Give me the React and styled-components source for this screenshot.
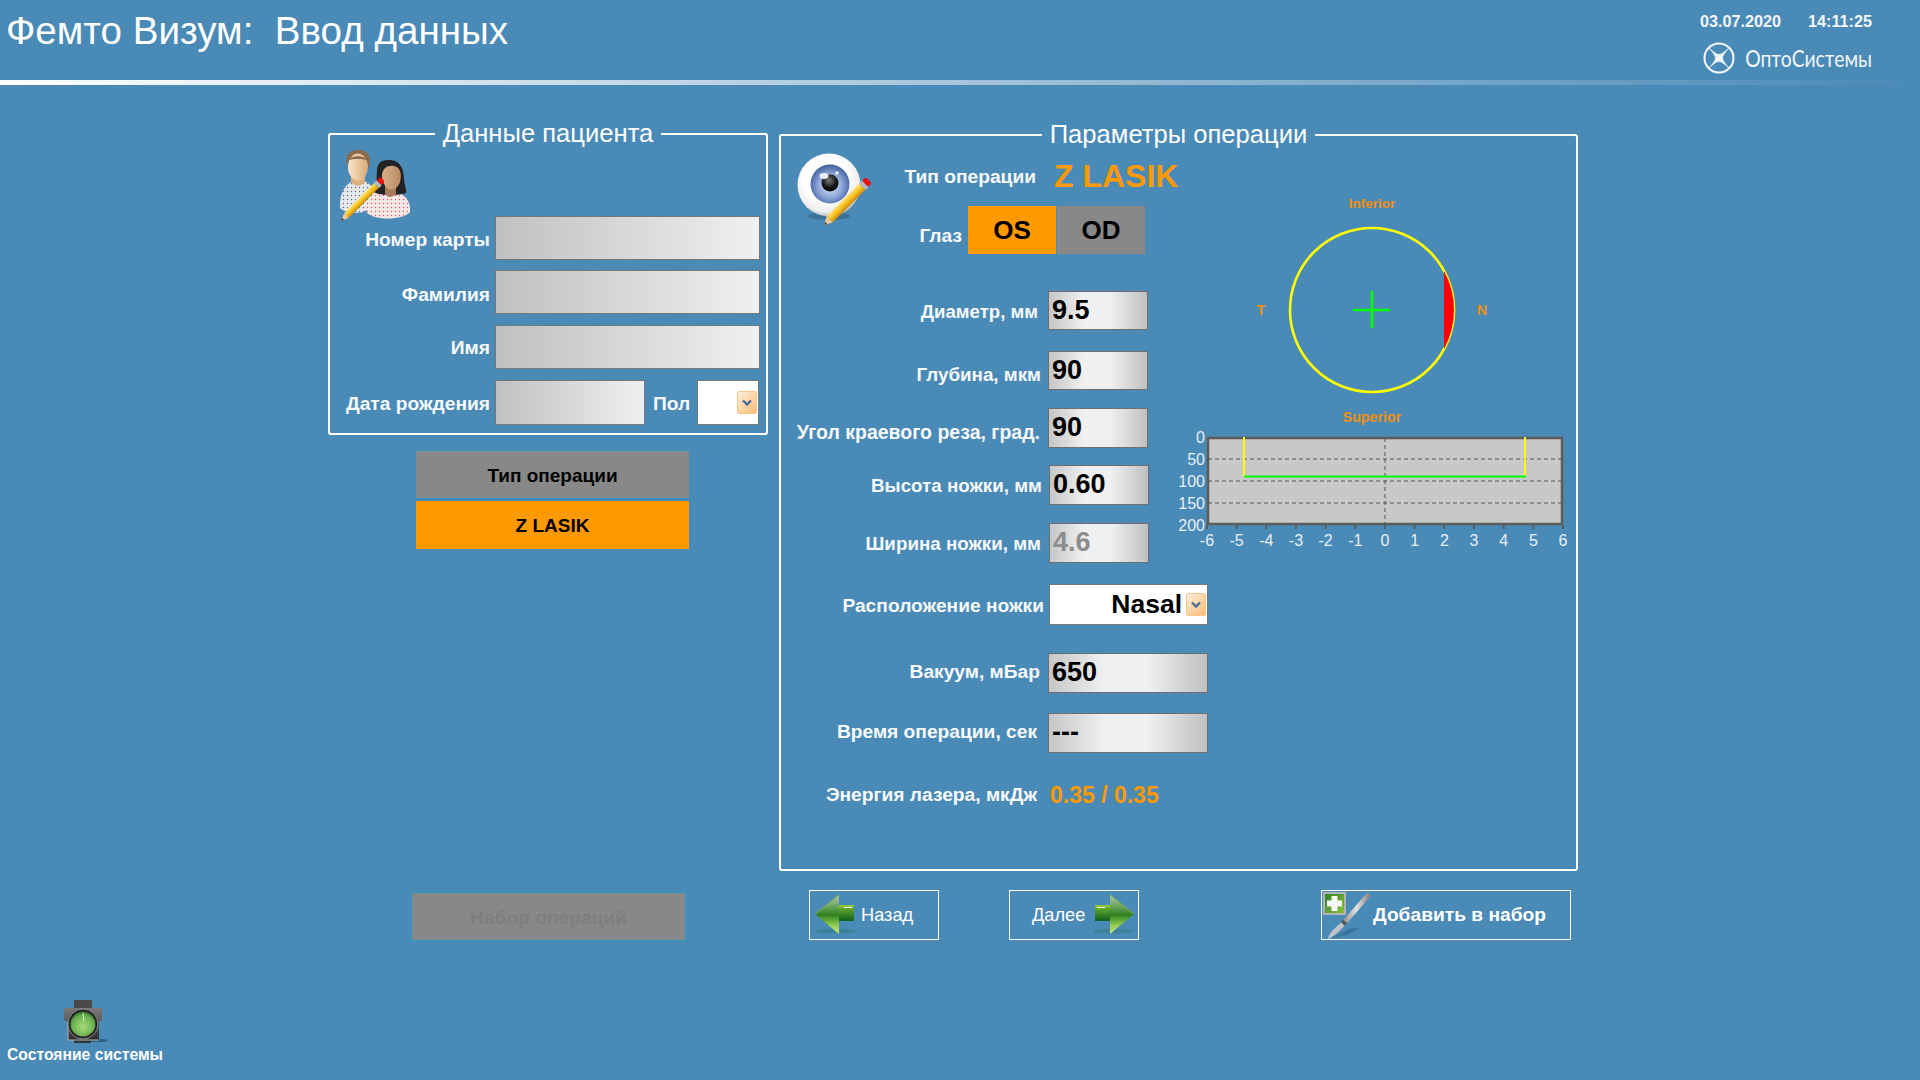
import styled, { createGlobalStyle } from "styled-components";

const GlobalStyle = createGlobalStyle`
  html, body {
    margin: 0;
    padding: 0;
    background: #4a8ab7;
  }
  * {
    box-sizing: border-box;
  }
`;

const Page = styled.div`
  width: 1920px;
  height: 1080px;
  overflow: hidden;
  display: flex;
  flex-direction: column;
  background: #4a8ab7;
  color: #fff;
  font-family: "Liberation Sans", Arial, sans-serif;
`;

const Header = styled.header`
  height: 80px;
  display: flex;
  justify-content: space-between;
  padding: 0 48px 0 6px;
`;

const Title = styled.h1`
  margin: 0;
  font-size: 38.6px;
  font-weight: 400;
  line-height: 62px;
  white-space: pre;
`;

const HeaderInfo = styled.div`
  display: flex;
  flex-direction: column;
  align-items: flex-end;
`;

const Clock = styled.div`
  display: flex;
  gap: 27px;
  margin-top: 12px;
  font-size: 16.2px;
  font-weight: 700;
  line-height: 18px;
  color: #f2f6f9;
`;

const Brand = styled.div`
  display: flex;
  align-items: center;
  gap: 10px;
  margin-top: 12px;
`;

const BrandName = styled.span`
  margin-left: -24px;
  font-family: Lato, "Liberation Sans", sans-serif;
  font-size: 23px;
  line-height: 30px;
  color: #f2f6f9;
  transform: scaleX(0.84);
  transform-origin: right center;
`;

const Divider = styled.div`
  height: 5px;
  background: linear-gradient(90deg, #fff 0%, #4a8ab7 100%);
`;

const Workspace = styled.main`
  height: 915px;
  display: flex;
  padding: 35px 0 0 328px;
`;

const LeftColumn = styled.div`
  width: 440px;
  display: flex;
  flex-direction: column;
`;

const RightColumn = styled.div`
  width: 799px;
  margin: 1px 0 0 11px;
  display: flex;
  flex-direction: column;
`;

const Panel = styled.fieldset`
  height: ${(p) => p.$height}px;
  margin: 0;
  padding: 0;
  min-width: 0;
  border: 2px solid #fff;
  border-radius: 3px;
`;

const PanelTitle = styled.legend`
  margin: 0 auto;
  padding: 0 8px;
  font-size: 25.6px;
  line-height: 28px;
  color: #fff;
  transform: translateY(-1px);
`;

const PatientRow = styled.div`
  display: flex;
  align-items: center;
  height: ${(p) => p.$height || 44}px;
  margin-top: ${(p) => p.$top}px;
`;

const FieldLabel = styled.span`
  flex: none;
  width: ${(p) => p.$width}px;
  margin-top: ${(p) => (p.$shift || 0) * 2}px;
  text-align: right;
  font-size: ${(p) => p.$size || 19.2}px;
  font-weight: 700;
  line-height: 24px;
  white-space: nowrap;
  color: #f7fafc;
`;

const PatientInput = styled.div`
  flex: none;
  width: ${(p) => p.$width}px;
  height: 100%;
  margin-left: 5px;
  border: 1px solid #777;
  background: linear-gradient(90deg, #c0c0c0 0%, #f0f0f0 100%);
`;

const SexLabel = styled.span`
  flex: none;
  width: 44px;
  margin: 2px 0 0 8px;
  font-size: 19.2px;
  font-weight: 700;
  line-height: 24px;
  color: #f7fafc;
`;

const SelectBox = styled.div`
  flex: none;
  display: flex;
  align-items: center;
  justify-content: flex-end;
  gap: 4px;
  width: ${(p) => p.$width}px;
  height: 100%;
  margin-left: ${(p) => p.$left}px;
  padding-right: 1px;
  border: 1px solid #777;
  background: #fff;
  color: #000;
  font-size: 26.5px;
  font-weight: 700;
`;

const ArrowButton = styled.span`
  flex: none;
  display: flex;
  align-items: center;
  justify-content: center;
  width: 20px;
  height: 23px;
  border: 1px solid #f7c48e;
  border-radius: 2px;
  background: linear-gradient(135deg, #fdeedd 0%, #fbbd76 100%);
`;

const OperationStack = styled.div`
  display: flex;
  flex-direction: column;
  gap: 2px;
  width: 273px;
  margin: 15px 0 0 88px;
`;

const OperationButton = styled.button`
  height: ${(p) => (p.$active ? 48 : 49)}px;
  padding: 2px 0 0;
  border: 1px solid ${(p) => (p.$active ? "#ff9900" : "#2a9ac0")};
  border-width: 1px 0;
  background: ${(p) => (p.$active ? "#ff9900" : "#888")};
  color: #000;
  font-family: inherit;
  font-size: 19px;
  font-weight: 700;
`;

const DisabledButton = styled(OperationButton)`
  width: 275px;
  height: 49px;
  margin: 343px 0 0 83px;
  border-width: 1px;
  color: #7e7e7e;
  font-size: 19.2px;
`;

const UpperSection = styled.div`
  display: flex;
  height: 414px;
`;

const FormColumn = styled.div`
  width: 389px;
  flex: none;
`;

const DiagramColumn = styled.div`
  width: 405px;
  margin-top: 41px;
  display: flex;
  flex-direction: column;
`;

const TopBlock = styled.div`
  display: flex;
  height: 105px;
`;

const TopFields = styled.div`
  display: flex;
  flex-direction: column;
  margin-left: 34px;
`;

const TypeRow = styled.div`
  display: flex;
  align-items: center;
  height: 57px;
`;

const TypeValue = styled.span`
  margin: -3px 0 0 18px;
  font-size: 32px;
  font-weight: 700;
  white-space: nowrap;
  color: #ff9900;
`;

const EyeRow = styled.div`
  display: flex;
  align-items: center;
  height: 48px;
`;

const EyeButton = styled.button`
  width: 88px;
  height: 48px;
  margin-left: ${(p) => p.$left}px;
  padding: 0;
  border: none;
  background: ${(p) => (p.$active ? "#ff9900" : "#888")};
  color: #000;
  font-family: inherit;
  font-size: 26px;
  font-weight: 700;
`;

const ParamRow = styled.div`
  display: flex;
  align-items: center;
  height: ${(p) => p.$height}px;
  margin-top: ${(p) => p.$top}px;
`;

const ValueField = styled.div`
  flex: none;
  width: ${(p) => p.$width}px;
  height: 100%;
  margin-left: ${(p) => p.$left}px;
  padding-left: 3px;
  border: 1px solid #6e6e6e;
  background: linear-gradient(90deg, #c6c6c6 0%, #f0f0f0 35%, #f0f0f0 62%, #c0c0c0 100%);
  color: ${(p) => (p.$disabled ? "#8c8c8c" : "#000")};
  font-size: 27px;
  font-weight: 700;
  line-height: 37px;
`;

const EnergyValue = styled.span`
  margin-left: 13px;
  font-size: 23px;
  font-weight: 700;
  color: #ff9900;
`;

const NavRow = styled.div`
  display: flex;
  margin-top: 19px;
  padding-left: 30px;
`;

const NavButton = styled.button`
  display: flex;
  align-items: center;
  width: ${(p) => p.$width}px;
  height: 50px;
  margin-left: ${(p) => p.$left || 0}px;
  padding: 0 0 0 ${(p) => p.$pad}px;
  gap: ${(p) => p.$gap}px;
  border: 1px solid #fff;
  background: transparent;
  color: #fff;
  font-family: inherit;
  font-size: ${(p) => (p.$strong ? 19.2 : 18.2)}px;
  font-weight: ${(p) => (p.$strong ? 700 : 400)};
  white-space: nowrap;
`;

const StatusBlock = styled.div`
  width: 156px;
  margin-left: 7px;
  display: flex;
  flex-direction: column;
  align-items: center;
  gap: 3px;
`;

const StatusText = styled.span`
  font-size: 15.7px;
  font-weight: 700;
  line-height: 18px;
  white-space: nowrap;
`;

const IconSvg = styled.svg`
  display: block;
  flex: none;
  overflow: visible;
`;

const PatientsSvg = styled(IconSvg)`
  margin: 2px 0 -8px 8px;
`;

const EyeSvg = styled(IconSvg)`
  margin: 4px 0 0 17px;
`;

const TrafficSvg = styled(IconSvg)`
  margin-left: 2px;
`;

const LogoMark = () => (
  <IconSvg width="32" height="32" viewBox="0 0 30 30">
    <circle cx="15" cy="15" r="13.6" fill="none" stroke="#f4f7fa" strokeWidth="1.9" />
    <path
      d="M5.4 5.4 Q13 12.5 15 11.5 Q17 12.5 24.6 5.4 Q17.5 13 18.5 15 Q17.5 17 24.6 24.6 Q17 17.5 15 18.5 Q13 17.5 5.4 24.6 Q12.5 17 11.5 15 Q12.5 13 5.4 5.4 Z"
      fill="#f4f7fa"
      stroke="#f4f7fa"
      strokeWidth="0.6"
    />
  </IconSvg>
);

const Chevron = () => (
  <IconSvg width="12" height="8" viewBox="0 0 12 8">
    <path d="M2 1.5 L6 5.5 L10 1.5" fill="none" stroke="#4c6a92" strokeWidth="2.4" />
  </IconSvg>
);

const Pencil = ({ id, x1, y1, x2, y2, half = 3.4 }) => {
  const angle = (Math.atan2(y2 - y1, x2 - x1) * 180) / Math.PI;
  const len = Math.hypot(x2 - x1, y2 - y1);
  return (
    <g transform={`translate(${x1} ${y1}) rotate(${angle})`}>
      <defs>
        <linearGradient id={id} x1="0" y1="0" x2="0" y2="1">
          <stop offset="0" stopColor="#ffe27a" />
          <stop offset="0.5" stopColor="#f6c21e" />
          <stop offset="1" stopColor="#c98a10" />
        </linearGradient>
      </defs>
      <path d={`M0 0 L8 ${-half} L8 ${half} Z`} fill="#edc998" />
      <path d="M0 0 L3 -1.3 L3 1.3 Z" fill="#333" />
      <rect x="8" y={-half} width={len - 16} height={half * 2} fill={`url(#${id})`} />
      <rect x={len - 8} y={-half - 0.2} width="4" height={half * 2 + 0.4} fill="#b8b8b8" />
      <rect x={len - 4} y={-half} width="5" height={half * 2} rx="2" fill="#ee1111" />
    </g>
  );
};

const PatientsIcon = () => (
  <PatientsSvg width="72" height="74" viewBox="0 0 72 74">
    <defs>
      <pattern id="dotsBlue" width="4" height="4" patternUnits="userSpaceOnUse">
        <rect width="4" height="4" fill="#e6e8ec" />
        <circle cx="1.5" cy="1.5" r="0.7" fill="#5a6a80" />
      </pattern>
      <pattern id="dotsRed" width="4" height="4" patternUnits="userSpaceOnUse">
        <rect width="4" height="4" fill="#f4e8e8" />
        <circle cx="1.5" cy="1.5" r="0.7" fill="#e05a5a" />
      </pattern>
      <linearGradient id="manFace" x1="0" y1="0" x2="1" y2="0">
        <stop offset="0" stopColor="#fde7c8" />
        <stop offset="1" stopColor="#d9a878" />
      </linearGradient>
      <linearGradient id="womanFace" x1="0" y1="0" x2="1" y2="0">
        <stop offset="0" stopColor="#d8b08a" />
        <stop offset="1" stopColor="#b98a64" />
      </linearGradient>
    </defs>
    <path d="M2 58 C1 42 8 32 20 29 C30 31 38 38 40 50 L26 62 C16 64 6 62 2 58 Z" fill="url(#dotsBlue)" />
    <path d="M13 24 L27 24 L27 32 C23 37 17 37 13 32 Z" fill="#dcae80" />
    <path d="M9 16 C6 2 14 0 21 0 C30 0 34 6 31 18 L28 10 C22 11 14 10 11 9 Z" fill="#8a6a4c" />
    <ellipse cx="20" cy="17" rx="10" ry="13.5" fill="url(#manFace)" />
    <path d="M10 10 C14 5 26 5 31 11 C26 8 15 9 10 10 Z" fill="#8a6a4c" />
    <path d="M29 63 C26 50 34 43 46 40 L54 40 C66 43 73 50 72 62 C66 70 38 71 29 63 Z" fill="url(#dotsRed)" />
    <path d="M39 20 C40 10 46 10 53 10 C63 11 66 20 66 30 C67 37 69 40 68 43 C60 46 42 46 36 42 C40 36 38 30 39 20 Z" fill="#222" />
    <path d="M47 33 L58 33 L58 44 C54 48 50 48 47 44 Z" fill="#a87c5a" />
    <path d="M44 26 C44 18 50 15 56 16 C63 17 64 26 62 32 C60 38 55 41 51 39 C47 37 44 32 44 26 Z" fill="url(#womanFace)" />
    <Pencil id="pencilA" x1={3} y1={71} x2={44} y2={30} />
  </PatientsSvg>
);

const EyeIcon = () => (
  <EyeSvg width="72" height="72" viewBox="0 0 72 72">
    <defs>
      <radialGradient id="eyeBall" cx="0.45" cy="0.4" r="0.62">
        <stop offset="0.55" stopColor="#fff" />
        <stop offset="0.85" stopColor="#ededed" />
        <stop offset="1" stopColor="#a9a9a9" />
      </radialGradient>
      <radialGradient id="iris" cx="0.5" cy="0.55" r="0.55">
        <stop offset="0" stopColor="#dbe6f7" />
        <stop offset="0.55" stopColor="#8fa8da" />
        <stop offset="1" stopColor="#3f5f9c" />
      </radialGradient>
      <radialGradient id="pupil" cx="0.45" cy="0.35" r="0.65">
        <stop offset="0" stopColor="#777" />
        <stop offset="0.6" stopColor="#1c1c1c" />
        <stop offset="1" stopColor="#000" />
      </radialGradient>
    </defs>
    <ellipse cx="31" cy="63" rx="21" ry="4" fill="#2f5f80" opacity="0.55" />
    <circle cx="31" cy="32" r="31.5" fill="url(#eyeBall)" />
    <circle cx="32" cy="31" r="19.5" fill="url(#iris)" />
    <circle cx="32" cy="30" r="8.5" fill="url(#pupil)" />
    <ellipse cx="26" cy="23" rx="4.5" ry="3" fill="#e9eef8" />
    <circle cx="39" cy="20" r="1.8" fill="#e9eef8" />
    <Pencil id="pencilB" x1={26} y1={72} x2={70} y2={28} half={4.4} />
  </EyeSvg>
);

const FlipSvg = styled(IconSvg)`
  transform: ${(p) => (p.$flip ? "scaleX(-1)" : "none")};
`;

const GreenArrow = ({ id, flip }) => (
  <FlipSvg width="40" height="42" viewBox="0 0 40 42" $flip={flip}>
    <defs>
      <linearGradient id={`${id}Head`} x1="0" y1="0" x2="0" y2="1">
        <stop offset="0" stopColor="#b4c8b0" />
        <stop offset="0.3" stopColor="#6aa55c" />
        <stop offset="0.52" stopColor="#2f8020" />
        <stop offset="0.78" stopColor="#94cf52" />
        <stop offset="1" stopColor="#c4ea8c" />
      </linearGradient>
      <linearGradient id={`${id}Shaft`} x1="0" y1="0" x2="0" y2="1">
        <stop offset="0" stopColor="#9ad03e" />
        <stop offset="0.25" stopColor="#5da42e" />
        <stop offset="1" stopColor="#0f5f1c" />
      </linearGradient>
    </defs>
    <ellipse cx="21" cy="37" rx="20" ry="2.6" fill="#3a8092" opacity="0.8" />
    <path d="M24 11 L39 11 L39 27 L24 27 Z" fill={`url(#${id}Shaft)`} />
    <path d="M29 13.5 L37 13.5" stroke="#f2fbe0" strokeWidth="1" />
    <path d="M0 20 L24 0.5 L24 40 Z" fill={`url(#${id}Head)`} />
    <path d="M1 19.5 L24 1" stroke="#7fb04a" strokeWidth="1" fill="none" />
  </FlipSvg>
);

const ScalpelIcon = () => (
  <IconSvg width="48" height="47" viewBox="0 0 48 47">
    <defs>
      <linearGradient id="handle" x1="0" y1="0" x2="1" y2="0">
        <stop offset="0" stopColor="#8c8c8c" />
        <stop offset="0.5" stopColor="#e2e2e2" />
        <stop offset="1" stopColor="#7d7d7d" />
      </linearGradient>
      <linearGradient id="plusBg" x1="0" y1="0" x2="1" y2="1">
        <stop offset="0" stopColor="#2f7d24" />
        <stop offset="1" stopColor="#8cc63f" />
      </linearGradient>
    </defs>
    <path d="M6 47 L26 37 L38 35 L24 43 Z" fill="#2e5f80" opacity="0.5" />
    <path d="M20 28 L44 1 C47 0 48 3 47 5 L24 31 Z" fill="url(#handle)" />
    <path d="M20 28 L24 31 L21.5 33.5 L18 30.5 Z" fill="#555" />
    <path d="M18 30.5 L21.5 33.5 C15 41 10 45 5 47 C6 41 12 36 18 30.5 Z" fill="#bfc4c6" />
    <rect x="1" y="1" width="21" height="21" fill="url(#plusBg)" stroke="#b5b5b5" strokeWidth="2" />
    <path d="M8.5 4 H14.5 V8.5 H19 V14.5 H14.5 V19 H8.5 V14.5 H4 V8.5 H8.5 Z" fill="#f7f7f7" />
  </IconSvg>
);

const TrafficLight = () => (
  <TrafficSvg width="44" height="43" viewBox="0 0 44 43">
    <defs>
      <linearGradient id="lightBody" x1="0" y1="0" x2="0" y2="1">
        <stop offset="0" stopColor="#7a7a7a" />
        <stop offset="1" stopColor="#2c2c2c" />
      </linearGradient>
      <radialGradient id="lens" cx="0.5" cy="0.6" r="0.6">
        <stop offset="0" stopColor="#a8dc78" />
        <stop offset="0.75" stopColor="#68ad50" />
        <stop offset="1" stopColor="#2c6a28" />
      </radialGradient>
    </defs>
    <ellipse cx="32" cy="40.5" rx="12" ry="1.6" fill="#24506e" opacity="0.7" />
    <rect x="10" y="0" width="18" height="8" fill="#4a4a4a" />
    <rect x="10" y="40" width="17" height="3" fill="#333" />
    <path d="M0 8 L38 8 L38 20 L35 22 L35 40 L4 40 L4 22 L0 20 Z" fill="url(#lightBody)" />
    <path d="M4 22 L4 40 L35 40" fill="none" stroke="#b5b5b5" strokeWidth="1" />
    <circle cx="19" cy="24" r="15" fill="#222" stroke="#8a8a8a" strokeWidth="1" />
    <circle cx="19" cy="24" r="12.5" fill="url(#lens)" />
    <path d="M19 13 L20 21" stroke="#d8f2c0" strokeWidth="1" />
  </TrafficSvg>
);

const CircleDiagram = () => (
  <IconSvg width="405" height="235" viewBox="0 0 405 235">
    <circle cx="202" cy="120" r="82" fill="none" stroke="#ffff00" strokeWidth="2.6" />
    <path d="M274 81 A81 81 0 0 1 274 159 Z" fill="#ff0000" />
    <path d="M184 120 H219 M202 102 V137" stroke="#00ff00" strokeWidth="2.6" strokeLinecap="round" />
    <g fill="#f0900f" fontFamily="'Liberation Sans', sans-serif" fontWeight="700" textAnchor="middle">
      <text x="202" y="18" fontSize="13.5">Inferior</text>
      <text x="202" y="232" fontSize="14.3">Superior</text>
      <text x="91" y="125" fontSize="14">T</text>
      <text x="312" y="125" fontSize="14">N</text>
    </g>
  </IconSvg>
);

const depthTicks = [0, 50, 100, 150, 200];
const radiusTicks = [-6, -5, -4, -3, -2, -1, 0, 1, 2, 3, 4, 5, 6];

const ProfileChart = () => (
  <IconSvg width="405" height="130" viewBox="0 0 405 130">
    <rect x="38" y="13" width="354" height="86" fill="#c8c8c8" stroke="#5c5c5c" strokeWidth="2.5" />
    <path
      d="M38 34 H392 M38 56 H392 M38 78 H392 M215 13 V99"
      stroke="#555"
      strokeWidth="1"
      strokeDasharray="4 3"
    />
    {radiusTicks.map((t) => (
      <path key={t} d={`M${215 + t * 29.67} 100 V104`} stroke="#5c5c5c" strokeWidth="2" />
    ))}
    <path d="M74 12 V51 M355 12 V51" stroke="#ffff00" strokeWidth="2" fill="none" />
    <path d="M74 51.5 H356" stroke="#00ff00" strokeWidth="2" />
    <g fill="#e8f0f5" fontFamily="'Liberation Sans', sans-serif" fontSize="16">
      {depthTicks.map((t) => (
        <text key={t} x="35" y={18 + t * 0.44} textAnchor="end">{t}</text>
      ))}
      {radiusTicks.map((t) => (
        <text key={t} x={215 + t * 29.67} y="121" textAnchor="middle">{t}</text>
      ))}
    </g>
  </IconSvg>
);

const upperParams = [
  { label: "Диаметр, мм", value: "9.5", top: 37, height: 39, labelW: 257, left: 10, width: 100, shift: 1, size: 18.6 },
  { label: "Глубина, мкм", value: "90", top: 21, height: 39, labelW: 260, left: 7, width: 100, shift: 4, size: 18.8 },
  { label: "Угол краевого реза, град.", value: "90", top: 18, height: 40, labelW: 259, left: 8, width: 100, shift: 4, size: 19.5 },
  { label: "Высота ножки, мм", value: "0.60", top: 17, height: 40, labelW: 261, left: 7, width: 100, shift: 1, size: 18.8 },
  { label: "Ширина ножки, мм", value: "4.6", top: 18, height: 40, labelW: 260, left: 8, width: 100, shift: 1, size: 18.8, disabled: true },
];

const App = () => {
  return (
    <Page>
      <GlobalStyle />
      <Header>
        <Title>{"Фемто Визум:  Ввод данных"}</Title>
        <HeaderInfo>
          <Clock>
            <span>03.07.2020</span>
            <span>14:11:25</span>
          </Clock>
          <Brand>
            <LogoMark />
            <BrandName>ОптоСистемы</BrandName>
          </Brand>
        </HeaderInfo>
      </Header>
      <Divider />

      <Workspace>
        <LeftColumn>
          <Panel $height={315}>
            <PanelTitle>Данные пациента</PanelTitle>
            <PatientsIcon />
            <PatientRow $top={0}>
              <FieldLabel $width={160} $shift={2}>Номер карты</FieldLabel>
              <PatientInput $width={265} />
            </PatientRow>
            <PatientRow $top={10}>
              <FieldLabel $width={160} $shift={3}>Фамилия</FieldLabel>
              <PatientInput $width={265} />
            </PatientRow>
            <PatientRow $top={11}>
              <FieldLabel $width={160} $shift={1}>Имя</FieldLabel>
              <PatientInput $width={265} />
            </PatientRow>
            <PatientRow $top={11} $height={45}>
              <FieldLabel $width={160} $shift={1}>Дата рождения</FieldLabel>
              <PatientInput $width={150} />
              <SexLabel>Пол</SexLabel>
              <SelectBox $width={62} $left={0}>
                <ArrowButton><Chevron /></ArrowButton>
              </SelectBox>
            </PatientRow>
          </Panel>
          <OperationStack>
            <OperationButton>Тип операции</OperationButton>
            <OperationButton $active>Z LASIK</OperationButton>
          </OperationStack>
          <DisabledButton disabled>Набор операций</DisabledButton>
        </LeftColumn>

        <RightColumn>
          <Panel $height={750}>
            <PanelTitle>Параметры операции</PanelTitle>
            <UpperSection>
              <FormColumn>
                <TopBlock>
                  <EyeIcon />
                  <TopFields>
                    <TypeRow>
                      <FieldLabel $width={132} $shift={-1}>Тип операции</FieldLabel>
                      <TypeValue>Z LASIK</TypeValue>
                    </TypeRow>
                    <EyeRow>
                      <FieldLabel $width={58} $shift={6}>Глаз</FieldLabel>
                      <EyeButton $active $left={6}>OS</EyeButton>
                      <EyeButton $left={1}>OD</EyeButton>
                    </EyeRow>
                  </TopFields>
                </TopBlock>
                {upperParams.map((p) => (
                  <ParamRow key={p.label} $top={p.top} $height={p.height}>
                    <FieldLabel $width={p.labelW} $shift={p.shift} $size={p.size}>{p.label}</FieldLabel>
                    <ValueField $width={p.width} $left={p.left} $disabled={p.disabled}>{p.value}</ValueField>
                  </ParamRow>
                ))}
              </FormColumn>
              <DiagramColumn>
                <CircleDiagram />
                <ProfileChart />
              </DiagramColumn>
            </UpperSection>
            <ParamRow $top={21} $height={41}>
              <FieldLabel $width={263} $shift={1}>Расположение ножки</FieldLabel>
              <SelectBox $width={159} $left={5}>
                Nasal
                <ArrowButton><Chevron /></ArrowButton>
              </SelectBox>
            </ParamRow>
            <ParamRow $top={28} $height={40}>
              <FieldLabel $width={259} $shift={-1}>Вакуум, мБар</FieldLabel>
              <ValueField $width={160} $left={8}>650</ValueField>
            </ParamRow>
            <ParamRow $top={20} $height={40}>
              <FieldLabel $width={256} $shift={-1}>Время операции, сек</FieldLabel>
              <ValueField $width={160} $left={11}>---</ValueField>
            </ParamRow>
            <ParamRow $top={27} $height={30}>
              <FieldLabel $width={256}>Энергия лазера, мкДж</FieldLabel>
              <EnergyValue>0.35 / 0.35</EnergyValue>
            </ParamRow>
          </Panel>
          <NavRow>
            <NavButton $width={130} $pad={5} $gap={6}>
              <GreenArrow id="back" flip={false} />
              Назад
            </NavButton>
            <NavButton $width={130} $left={70} $pad={22} $gap={9}>
              Далее
              <GreenArrow id="next" flip />
            </NavButton>
            <NavButton $width={250} $left={182} $pad={1} $gap={2} $strong>
              <ScalpelIcon />
              Добавить в набор
            </NavButton>
          </NavRow>
        </RightColumn>
      </Workspace>

      <StatusBlock>
        <TrafficLight />
        <StatusText>Состояние системы</StatusText>
      </StatusBlock>
    </Page>
  );
};

export default App;
